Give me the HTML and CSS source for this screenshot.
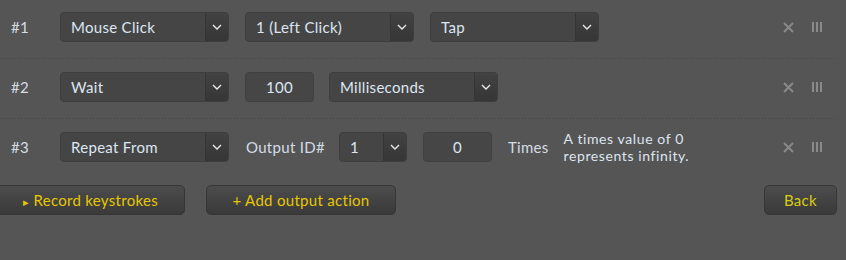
FILE: index.html
```html
<!DOCTYPE html>
<html lang="en">
<head>
    <meta charset="UTF-8">
    <title>Output actions</title>
    <link rel="stylesheet" href="styles.css">
</head>
<body>

<div class="actions">
    <div class="row">
        <span class="num">#1</span>
        <div class="select wide">
            <select><option>Mouse Click</option></select>
            <span class="arrow"><svg width="10" height="6" viewBox="0 0 10 6"><path d="M1 1l4 4 4-4" fill="none" stroke="#e8e8e8" stroke-width="1.4"/></svg></span>
        </div>
        <div class="select wide">
            <select><option>1 (Left Click)</option></select>
            <span class="arrow"><svg width="10" height="6" viewBox="0 0 10 6"><path d="M1 1l4 4 4-4" fill="none" stroke="#e8e8e8" stroke-width="1.4"/></svg></span>
        </div>
        <div class="select wide">
            <select><option>Tap</option></select>
            <span class="arrow"><svg width="10" height="6" viewBox="0 0 10 6"><path d="M1 1l4 4 4-4" fill="none" stroke="#e8e8e8" stroke-width="1.4"/></svg></span>
        </div>
        <div class="tools">
            <svg class="remove" width="11" height="11" viewBox="0 0 11 11"><path d="M1 1l9 9M10 1l-9 9" stroke="#8a8a8a" stroke-width="2"/></svg>
            <span class="handle"><i></i><i></i><i></i></span>
        </div>
    </div>

    <div class="row">
        <span class="num">#2</span>
        <div class="select wide">
            <select><option>Wait</option></select>
            <span class="arrow"><svg width="10" height="6" viewBox="0 0 10 6"><path d="M1 1l4 4 4-4" fill="none" stroke="#e8e8e8" stroke-width="1.4"/></svg></span>
        </div>
        <input class="field" type="text" value="100">
        <div class="select wide unit">
            <select><option>Milliseconds</option></select>
            <span class="arrow"><svg width="10" height="6" viewBox="0 0 10 6"><path d="M1 1l4 4 4-4" fill="none" stroke="#e8e8e8" stroke-width="1.4"/></svg></span>
        </div>
        <div class="tools">
            <svg class="remove" width="11" height="11" viewBox="0 0 11 11"><path d="M1 1l9 9M10 1l-9 9" stroke="#8a8a8a" stroke-width="2"/></svg>
            <span class="handle"><i></i><i></i><i></i></span>
        </div>
    </div>

    <div class="row last">
        <span class="num">#3</span>
        <div class="select wide">
            <select><option>Repeat From</option></select>
            <span class="arrow"><svg width="10" height="6" viewBox="0 0 10 6"><path d="M1 1l4 4 4-4" fill="none" stroke="#e8e8e8" stroke-width="1.4"/></svg></span>
        </div>
        <span class="label">Output ID#</span>
        <div class="select small">
            <select><option>1</option></select>
            <span class="arrow"><svg width="10" height="6" viewBox="0 0 10 6"><path d="M1 1l4 4 4-4" fill="none" stroke="#e8e8e8" stroke-width="1.4"/></svg></span>
        </div>
        <input class="field" type="text" value="0">
        <span class="label times">Times</span>
        <span class="note">A times value of 0<br>represents infinity.</span>
        <div class="tools">
            <svg class="remove" width="11" height="11" viewBox="0 0 11 11"><path d="M1 1l9 9M10 1l-9 9" stroke="#8a8a8a" stroke-width="2"/></svg>
            <span class="handle"><i></i><i></i><i></i></span>
        </div>
    </div>
</div>

<div class="buttons">
    <button class="btn record"><span class="play">&#9656;</span> Record keystrokes</button>
    <button class="btn add">+ Add output action</button>
    <button class="btn back">Back</button>
</div>

</body>
</html>
```

FILE: styles.css
```css
body {
    margin: 0;
    background-color: #555555;
    font-family: 'Lato', 'Open Sans', Arial, sans-serif;
    font-size: 15px;
    letter-spacing: 0.3px;
    color: #dde5ef;
    overflow: hidden;
}
.actions {
    width: 837px;
    margin-top: -1px;
}
.row {
    display: flex;
    align-items: center;
    height: 30px;
    padding: 13px 0 17px;
    background-image: linear-gradient(to right, #454545 1px, transparent 1px);
    background-size: 3px 1px;
    background-repeat: repeat-x;
    background-position: 0 bottom;
}
.row.last {
    background-image: none;
}
.num {
    width: 49px;
    padding-left: 11px;
    color: #d4dce6;
}
.select {
    position: relative;
    height: 30px;
    margin-right: 16px;
    box-sizing: border-box;
    border: 1px solid #3e3e3e;
    border-radius: 4px;
    background-color: #454545;
    overflow: hidden;
}
.select.wide {
    width: 169px;
}
.select.small {
    width: 68px;
}
.select.unit {
    margin-left: -1px;
}
.select select {
    appearance: none;
    -webkit-appearance: none;
    width: 100%;
    height: 100%;
    border: none;
    background: transparent;
    color: #dde6f2;
    font-family: inherit;
    font-size: 15px;
    letter-spacing: 0.3px;
    padding: 0 0 0 10px;
    outline: none;
}
.arrow {
    position: absolute;
    top: 0;
    right: 0;
    bottom: 0;
    width: 22px;
    display: flex;
    align-items: center;
    justify-content: center;
    border-left: 1px solid #363636;
    background: linear-gradient(#424242, #363636);
    pointer-events: none;
}
.field {
    width: 69px;
    height: 30px;
    box-sizing: border-box;
    margin-right: 16px;
    border: 1px solid #404040;
    border-radius: 4px;
    background-color: #464646;
    color: #dde6f2;
    font-family: inherit;
    font-size: 15px;
    letter-spacing: 0.3px;
    text-align: center;
    outline: none;
}
.label {
    margin: 0 14px 0 1px;
    color: #d4dce6;
}
.label.times {
    margin: 0 15px 0 0;
}
.note {
    font-size: 14px;
    letter-spacing: 0.6px;
    line-height: 17px;
    color: #dde5ef;
}
.tools {
    margin-left: auto;
    display: flex;
    align-items: center;
    gap: 18px;
    padding-right: 15px;
}
.handle {
    display: flex;
    gap: 2px;
    height: 10px;
}
.handle i {
    width: 2px;
    height: 10px;
    background-color: #8a8a8a;
}
.buttons {
    display: flex;
    width: 837px;
    margin-top: 6px;
}
.btn {
    height: 30px;
    box-sizing: border-box;
    border: 1px solid #363636;
    border-radius: 5px;
    background: linear-gradient(#4c4c4c, #3a3a3a);
    color: #e8c600;
    font-family: inherit;
    font-size: 15px;
    letter-spacing: 0.3px;
    cursor: pointer;
}
.record {
    width: 189px;
    margin-left: -4px;
}
.play {
    font-size: 11px;
}
.add {
    width: 190px;
    margin-left: 21px;
}
.back {
    width: 73px;
    margin-left: auto;
    color: #d8cc10;
}
```
